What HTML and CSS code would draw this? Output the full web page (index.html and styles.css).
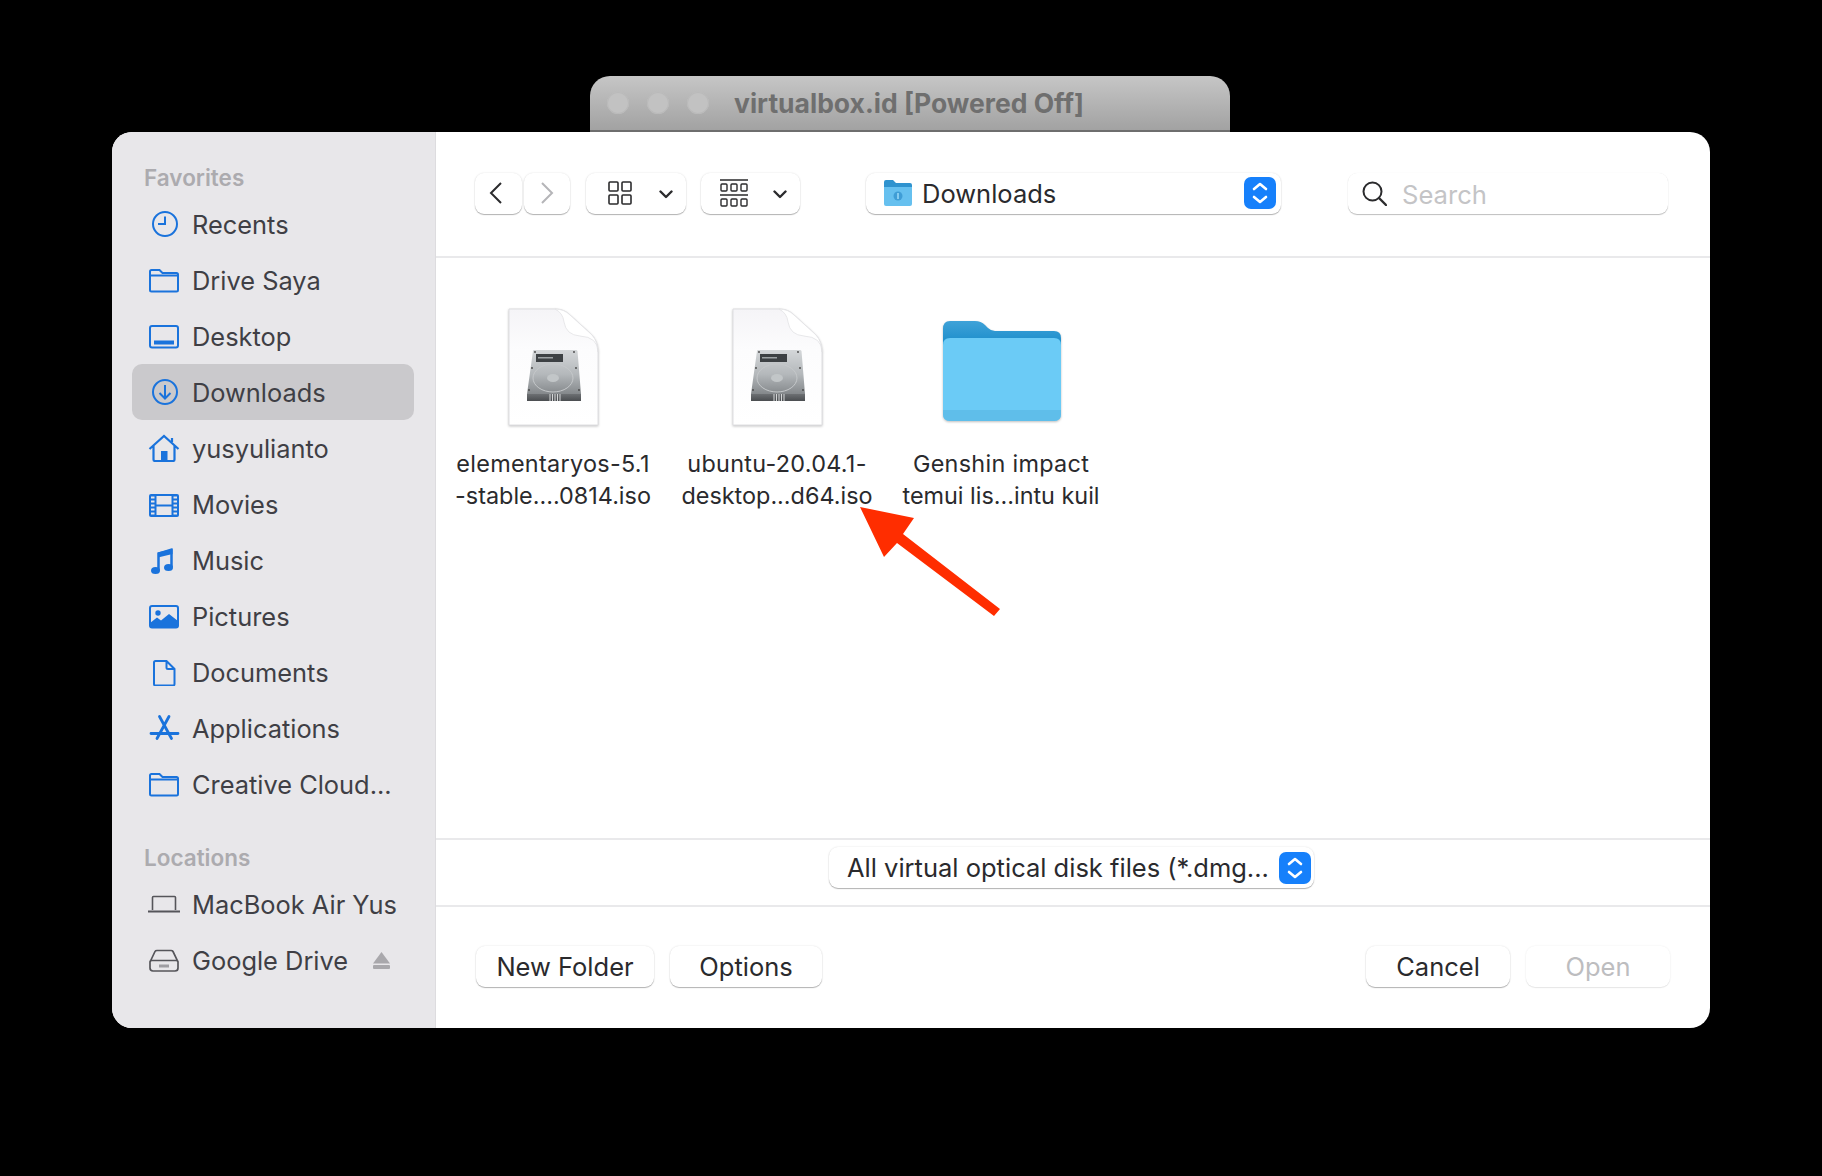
FILE: index.html
```html
<!DOCTYPE html>
<html lang="en">
<head>
    <meta charset="UTF-8">
    <title>Open file</title>
    <link rel="stylesheet" href="styles.css">
</head>
<body>
    <svg class="defs" width="0" height="0">
        <defs>
            <symbol id="outline-folder" viewBox="0 0 32 28">
                <path d="M2 9.500H30M2 24V5.500Q2 4 3.500 4H11.500L14.500 7H28.500Q30 7 30 8.500V24Q30 25.500 28.500 25.500H3.500Q2 25.500 2 24Z" fill="none" stroke="currentColor" stroke-width="2"/>
            </symbol>
            <linearGradient id="drive-body" x1="0" y1="0" x2="0" y2="1">
                <stop offset="0" stop-color="#d4d7d9"/>
                <stop offset="0.55" stop-color="#b4b8bb"/>
                <stop offset="1" stop-color="#84888b"/>
            </linearGradient>
            <linearGradient id="drive-base" x1="0" y1="0" x2="0" y2="1">
                <stop offset="0" stop-color="#6d7073"/>
                <stop offset="1" stop-color="#4a4d50"/>
            </linearGradient>
            <linearGradient id="doc-fill" x1="0" y1="0" x2="0" y2="1">
                <stop offset="0" stop-color="#f5f4f7"/>
                <stop offset="0.35" stop-color="#fcfcfd"/>
                <stop offset="1" stop-color="#ffffff"/>
            </linearGradient>
            <linearGradient id="folder-tab" x1="0" y1="0" x2="0" y2="1">
                <stop offset="0" stop-color="#3fa2d8"/>
                <stop offset="1" stop-color="#0f86c6"/>
            </linearGradient>
            <symbol id="iso-file" viewBox="0 0 91 118">
                <path d="M1 1H47Q56 1 62 7L84 27Q90 34 90 44V117H1Z" fill="url(#doc-fill)" stroke="#dedee1"/>
                <path d="M47 1Q56 1 62 7L84 27Q90 34 90 44Q90 29 72 28Q58 27 56 14Q55 5 47 1Z" fill="#ffffff" stroke="#e2e2e5" stroke-width="0.800"/>
                <path d="M25 43Q25 42 26 42H68Q69 42 69.500 43L73 86H19Z" fill="url(#drive-body)"/>
                <rect x="28" y="46" width="27" height="8" fill="#3d4144"/>
                <rect x="30" y="49" width="15" height="1.500" fill="#9ea3a5"/>
                <ellipse cx="45" cy="70" rx="20" ry="14" fill="none" stroke="#c5c8ca"/>
                <ellipse cx="45" cy="70" rx="6" ry="4" fill="#c2c6c8"/>
                <rect x="19" y="86" width="54" height="7" fill="url(#drive-base)"/>
                <path d="M42 86v7M44.500 86v7M47 86v7M49.500 86v7M52 86v7" stroke="#d4d6d7"/>
                <circle cx="27" cy="44" r="0.900" fill="#444"/><circle cx="66" cy="44" r="0.900" fill="#444"/>
                <circle cx="24" cy="60" r="0.900" fill="#444"/><circle cx="68" cy="60" r="0.900" fill="#444"/>
                <circle cx="21" cy="82" r="0.900" fill="#444"/><circle cx="71" cy="82" r="0.900" fill="#444"/>
            </symbol>
            <symbol id="stepper" viewBox="0 0 32 32">
                <rect width="32" height="32" rx="7" fill="#1680fb"/>
                <path d="M10 12L16 7L22 12M10 20L16 25L22 20" fill="none" stroke="#fff" stroke-width="2.600" stroke-linecap="round" stroke-linejoin="round"/>
            </symbol>
            <symbol id="chevron" viewBox="0 0 14 9">
                <path d="M1.500 1.500L7 7L12.500 1.500" fill="none" stroke="#2b2b2d" stroke-width="2.400" stroke-linecap="round" stroke-linejoin="round"/>
            </symbol>
        </defs>
    </svg>

    <div class="stage">
        <div class="parent-window">
            <span class="light"></span>
            <span class="light"></span>
            <span class="light"></span>
            <span class="parent-title">virtualbox.id [Powered Off]</span>
        </div>

        <div class="dialog">
            <aside class="sidebar">
                <h3 class="side-heading">Favorites</h3>
                <ul class="side-list">
                    <li class="side-item">
                        <svg class="side-icon" viewBox="0 0 32 28"><circle cx="17" cy="14" r="12" fill="none" stroke="currentColor" stroke-width="2"/><path d="M17 6.500V14H10" fill="none" stroke="currentColor" stroke-width="2"/></svg>
                        Recents
                    </li>
                    <li class="side-item">
                        <svg class="side-icon"><use href="#outline-folder"/></svg>
                        Drive Saya
                    </li>
                    <li class="side-item">
                        <svg class="side-icon" viewBox="0 0 32 28"><rect x="2" y="4" width="28" height="21.500" rx="2" fill="none" stroke="currentColor" stroke-width="2"/><rect x="6" y="18.500" width="20" height="4" fill="currentColor"/></svg>
                        Desktop
                    </li>
                    <li class="side-item active">
                        <svg class="side-icon" viewBox="0 0 32 28"><circle cx="17" cy="14" r="12" fill="none" stroke="currentColor" stroke-width="2"/><path d="M17 7V20M11.500 15L17 20.500L22.500 15" fill="none" stroke="currentColor" stroke-width="2"/></svg>
                        Downloads
                    </li>
                    <li class="side-item">
                        <svg class="side-icon" viewBox="0 0 32 28"><path d="M1.500 15L16 2L30.500 15M5.500 12V25.500Q5.500 27 7 27H25Q26.500 27 26.500 25.500V12M24 4V8" fill="none" stroke="currentColor" stroke-width="2.200"/><rect x="13" y="17" width="6.500" height="10" fill="currentColor"/></svg>
                        yusyulianto
                    </li>
                    <li class="side-item">
                        <svg class="side-icon" viewBox="0 0 32 28"><rect x="1" y="4" width="30" height="23" rx="2" fill="currentColor"/><rect x="8.500" y="6" width="15" height="8.500" fill="#e8e7ea"/><rect x="8.500" y="16.500" width="15" height="8.500" fill="#e8e7ea"/><path d="M3 7.500h3.500M3 11.500h3.500M3 15.500h3.500M3 19.500h3.500M3 23.500h3.500M25.500 7.500h3.500M25.500 11.500h3.500M25.500 15.500h3.500M25.500 19.500h3.500M25.500 23.500h3.500" stroke="#e8e7ea" stroke-width="2"/></svg>
                        Movies
                    </li>
                    <li class="side-item">
                        <svg class="side-icon" viewBox="0 0 32 28"><path d="M10.500 24.500V7.500L23.500 4.500V21" fill="none" stroke="currentColor" stroke-width="2.500"/><path d="M10 6.500L24.500 2V8L10 11.500Z" fill="currentColor"/><ellipse cx="7.500" cy="24.500" rx="4.500" ry="3.500" fill="currentColor"/><ellipse cx="20.500" cy="21.500" rx="4.500" ry="3.500" fill="currentColor"/></svg>
                        Music
                    </li>
                    <li class="side-item">
                        <svg class="side-icon" viewBox="0 0 32 28"><rect x="2" y="4" width="28" height="21.500" rx="2" fill="none" stroke="currentColor" stroke-width="2"/><circle cx="10" cy="11" r="2.700" fill="currentColor"/><path d="M2 24V21L9 15.500L13 18.500L21 12L30 19V24Q30 26 28 26H4Q2 26 2 24Z" fill="currentColor"/></svg>
                        Pictures
                    </li>
                    <li class="side-item">
                        <svg class="side-icon" viewBox="0 0 32 28"><path d="M6 26V4.500Q6 3 7.500 3H18.500L26.500 11V26Q26.500 27.500 25 27.500H7.500Q6 27.500 6 26ZM18.500 3V9.500Q18.500 11 20 11H26.500" fill="none" stroke="currentColor" stroke-width="2"/></svg>
                        Documents
                    </li>
                    <li class="side-item">
                        <svg class="side-icon" viewBox="0 0 32 28"><path d="M11.500 2.500L23.500 24.500M21 2.500L9 24.500M3 19.500H30" fill="none" stroke="currentColor" stroke-width="2.800" stroke-linecap="round"/></svg>
                        Applications
                    </li>
                    <li class="side-item">
                        <svg class="side-icon"><use href="#outline-folder"/></svg>
                        Creative Cloud...
                    </li>
                </ul>

                <h3 class="side-heading side-heading-lower">Locations</h3>
                <ul class="side-list">
                    <li class="side-item">
                        <svg class="side-icon grey" viewBox="0 0 32 28"><path d="M4.500 20V7.500Q4.500 6.500 5.500 6.500H26.500Q27.500 6.500 27.500 7.500V20" fill="none" stroke="currentColor" stroke-width="1.600"/><rect x="0" y="20.500" width="32" height="2" fill="currentColor"/></svg>
                        MacBook Air Yus
                    </li>
                    <li class="side-item">
                        <svg class="side-icon grey" viewBox="0 0 32 28"><path d="M2 16L7 5.500Q7.500 4.500 9 4.500H23Q24.500 4.500 25 5.500L30 16V22Q30 25 27 25H5Q2 25 2 22ZM2 16Q2 14.500 4 14.500H28Q30 14.500 30 16" fill="none" stroke="currentColor" stroke-width="1.700"/><path d="M12 18.500v3M14 18.500v3M16 18.500v3M18 18.500v3M20 18.500v3" stroke="currentColor"/></svg>
                        Google Drive
                        <svg class="eject" viewBox="0 0 17 17"><path d="M8.500 0L17 11.500H0Z" fill="#a9a8ac"/><rect y="13" width="17" height="4" rx="1" fill="#a9a8ac"/></svg>
                    </li>
                </ul>
            </aside>

            <main class="main">
                <div class="toolbar">
                    <div class="btn nav-btn">
                        <svg width="16" height="24" viewBox="0 0 16 24"><path d="M13 2L3 12L13 22" fill="none" stroke="#2b2b2d" stroke-width="2"/></svg>
                    </div>
                    <div class="btn nav-btn nav-next">
                        <svg width="16" height="24" viewBox="0 0 16 24"><path d="M3 2L13 12L3 22" fill="none" stroke="#b5b5b8" stroke-width="2"/></svg>
                    </div>
                    <div class="btn view-btn">
                        <svg width="24" height="24" viewBox="0 0 24 24"><g fill="none" stroke="#2b2b2d" stroke-width="1.600"><rect x="1" y="1" width="9" height="9" rx="1"/><rect x="14" y="1" width="9" height="9" rx="1"/><rect x="1" y="14" width="9" height="9" rx="1"/><rect x="14" y="14" width="9" height="9" rx="1"/></g></svg>
                        <svg class="chev" width="14" height="9"><use href="#chevron"/></svg>
                    </div>
                    <div class="btn view-btn view-gallery">
                        <svg width="28" height="28" viewBox="0 0 28 28"><g fill="none" stroke="#2b2b2d" stroke-width="1.400"><path d="M0 1H28M0 16H28"/><rect x="1" y="5" width="6" height="7" rx="1"/><rect x="11" y="5" width="6" height="7" rx="1"/><rect x="21" y="5" width="6" height="7" rx="1"/><rect x="1" y="20" width="6" height="7" rx="1"/><rect x="11" y="20" width="6" height="7" rx="1"/><rect x="21" y="20" width="6" height="7" rx="1"/></g></svg>
                        <svg class="chev" width="14" height="9"><use href="#chevron"/></svg>
                    </div>
                    <div class="btn path-popup">
                        <svg width="30" height="28" viewBox="0 0 30 28"><path d="M1 3Q1 1 3 1H10L13 4H27Q29 4 29 6V10H1Z" fill="#2f93cf"/><path d="M1 8H29V25Q29 27 27 27H3Q1 27 1 25Z" fill="#66c0ef"/><circle cx="15" cy="17" r="4.500" fill="#3f9dd6"/><path d="M15 14V20" stroke="#9fdcf8" stroke-width="1.500"/></svg>
                        <span class="popup-label">Downloads</span>
                        <svg class="stepper"><use href="#stepper"/></svg>
                    </div>
                    <div class="btn search-box">
                        <svg width="25" height="25" viewBox="0 0 25 25"><circle cx="10.500" cy="10.500" r="9" fill="none" stroke="#2b2b2d" stroke-width="2"/><path d="M17 17L24 24" stroke="#2b2b2d" stroke-width="2.400" stroke-linecap="round"/></svg>
                        <span class="search-label">Search</span>
                    </div>
                </div>

                <div class="files">
                    <div class="file">
                        <svg class="file-icon doc-icon" width="91" height="118"><use href="#iso-file"/></svg>
                        <p class="file-name">elementaryos-5.1<br>-stable....0814.iso</p>
                    </div>
                    <div class="file">
                        <svg class="file-icon doc-icon" width="91" height="118"><use href="#iso-file"/></svg>
                        <p class="file-name">ubuntu-20.04.1-<br>desktop...d64.iso</p>
                    </div>
                    <div class="file">
                        <svg class="file-icon folder-icon" width="120" height="118" viewBox="0 0 120 118">
                            <path d="M2 36V21Q2 13 9 13H34Q40 13 44 17L47 20Q50 23 54 23H113Q120 23 120 30V44H2Z" fill="url(#folder-tab)"/>
                            <path d="M2 37Q2 30 9 30H113Q120 30 120 37V106Q120 113 113 113H9Q2 113 2 106Z" fill="#6bcbf6"/>
                            <path d="M2 102H120V106Q120 113 113 113H9Q2 113 2 106Z" fill="#5fbeea"/>
                        </svg>
                        <p class="file-name">Genshin impact<br>temui lis...intu kuil</p>
                    </div>
                </div>

                <div class="filter-bar">
                    <div class="btn filter-popup">
                        <span class="popup-label">All virtual optical disk files (*.dmg...</span>
                        <svg class="stepper"><use href="#stepper"/></svg>
                    </div>
                </div>

                <div class="footer">
                    <div class="btn action-btn new-folder">New Folder</div>
                    <div class="btn action-btn options">Options</div>
                    <div class="btn action-btn cancel">Cancel</div>
                    <div class="btn action-btn open">Open</div>
                </div>
            </main>
        </div>

        <svg class="arrow" width="150" height="115" viewBox="855 503 150 115">
            <path d="M859 506L913 517L902 533L999 608L993 615L896 542L883 556Z" fill="#ff2d00"/>
        </svg>
    </div>
</body>
</html>
```

FILE: styles.css
```css
*{
    box-sizing: border-box;
}

html, body{
    margin: 0;
    height: 100%;
    background: #000;
}

body{
    font-family: Inter, "Liberation Sans", sans-serif;
    overflow: hidden;
}

.defs{
    display: block;
    height: 0;
}

.stage{
    position: relative;
    padding-top: 76px;
}

/* window behind the dialog */
.parent-window{
    display: flex;
    align-items: center;
    gap: 18px;
    width: 640px;
    height: 56px;
    margin-left: 590px;
    padding: 0 0 1px 17px;
    border-radius: 20px 20px 0 0;
    border-bottom: 2px solid #6e6e6e;
    background: linear-gradient(#c6c6c6, #a2a2a2);
}

.light{
    width: 22px;
    height: 22px;
    border-radius: 50%;
    background: #c2c2c2;
    box-shadow: inset 0 0 0 1px #bababa;
}

.parent-title{
    margin-left: 7px;
    color: #6f6f6f;
    font-size: 26.5px;
    font-weight: 700;
}

.dialog{
    display: flex;
    width: 1598px;
    height: 896px;
    margin-left: 112px;
    border-radius: 20px;
    overflow: hidden;
    background: #fff;
}

/* sidebar */
.sidebar{
    flex: none;
    width: 324px;
    padding: 31px 22px 0 20px;
    background: #e8e7ea;
    box-shadow: inset -1px 0 0 #dddcdf;
}

.side-heading{
    height: 28px;
    margin: 1px 0 4px 12px;
    color: #acabaf;
    font-size: 22.5px;
    font-weight: 600;
    line-height: 28px;
}

.side-heading-lower{
    margin-top: 32px;
    margin-bottom: 4px;
}

.side-list{
    margin: 0;
    padding: 0;
    list-style: none;
}

.side-item{
    display: flex;
    align-items: center;
    gap: 12px;
    height: 56px;
    padding: 0 24px 0 16px;
    border-radius: 10px;
    color: #3f3f45;
    font-size: 25.4px;
    white-space: nowrap;
}

.side-item.active{
    background: #cac9cc;
}

.side-icon{
    flex: none;
    width: 32px;
    height: 28px;
    color: #1a73dc;
}

.side-icon.grey{
    color: #55555a;
}

.eject{
    width: 17px;
    height: 17px;
    margin-left: auto;
}

/* main pane */
.main{
    flex: 1;
    display: flex;
    flex-direction: column;
    min-width: 0;
}

.btn{
    display: flex;
    align-items: center;
    height: 41px;
    border-radius: 9px;
    background: #fff;
    box-shadow: 0 1px 1px rgba(0, 0, 0, .28), 0 0 2px rgba(0, 0, 0, .12);
}

.toolbar{
    flex: none;
    display: flex;
    align-items: center;
    height: 126px;
    padding: 0 42px 2px 39px;
    border-bottom: 2px solid #e9e9eb;
}

.nav-btn{
    justify-content: center;
    width: 47px;
    padding-right: 6px;
}

.nav-next{
    width: 46px;
    margin-left: 2px;
    padding-right: 0;
}

.view-btn{
    justify-content: space-between;
    width: 100px;
    margin-left: 16px;
    padding: 0 13px 0 22px;
}

.view-gallery{
    width: 99px;
    margin-left: 15px;
    padding-left: 19px;
}

.chev{
    margin-top: 2px;
}

.path-popup{
    width: 415px;
    margin-left: 66px;
    padding: 0 5px 0 17px;
}

.popup-label{
    margin-left: 9px;
    color: #2a2a2d;
    font-size: 25.5px;
    white-space: nowrap;
}

.stepper{
    flex: none;
    width: 32px;
    height: 32px;
    margin-left: auto;
}

.search-box{
    width: 320px;
    margin-left: auto;
    padding-left: 14px;
    box-shadow: 0 1px 1px rgba(0, 0, 0, .25), 0 0 1px rgba(0, 0, 0, .08);
}

.search-label{
    margin: 2px 0 0 15px;
    color: #c4c4c6;
    font-size: 25.6px;
}

/* file grid */
.files{
    flex: 1;
    display: flex;
    align-items: flex-start;
    padding: 50px 0 0 5px;
}

.file{
    width: 224px;
    text-align: center;
}

.file-icon{
    display: block;
    margin: 0 auto;
}

.doc-icon{
    filter: drop-shadow(0 1px 1px rgba(0, 0, 0, .22));
}

.folder-icon{
    filter: drop-shadow(0 1px 1px rgba(0, 0, 0, .25));
}

.file-name{
    margin: 22px 0 0;
    color: #2a2a2d;
    font-size: 23.4px;
    line-height: 32px;
    white-space: nowrap;
}

.file-name::first-line{
    letter-spacing: .3px;
}

/* type filter */
.filter-bar{
    flex: none;
    display: flex;
    height: 69px;
    padding: 7px 0 0 393px;
    border-top: 2px solid #e9e9eb;
    border-bottom: 2px solid #e9e9eb;
}

.filter-popup{
    width: 485px;
    padding: 0 3px 0 9px;
}

/* bottom buttons */
.footer{
    flex: none;
    display: flex;
    gap: 16px;
    height: 121px;
    padding: 39px 40px 0;
}

.action-btn{
    justify-content: center;
    color: #2a2a2d;
    font-size: 25.5px;
}

.new-folder{
    width: 178px;
}

.options{
    width: 152px;
}

.cancel{
    width: 144px;
    margin-left: auto;
}

.open{
    width: 144px;
    color: #bdbdbf;
    box-shadow: 0 1px 1px rgba(0, 0, 0, .08), 0 0 2px rgba(0, 0, 0, .08);
}

/* annotation drawn over the screenshot */
.arrow{
    position: absolute;
    left: 856px;
    top: 504px;
}
```
